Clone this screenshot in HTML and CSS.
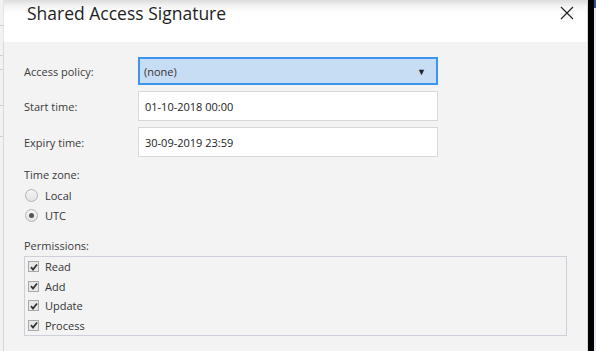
FILE: index.html
```html
<!DOCTYPE html>
<html>
<head>
<meta charset="utf-8">
<link rel="stylesheet" href="styles.css">
</head>
<body>
<div class="screen">
  <div class="behind-left">
    <span class="tick t1"></span><span class="tick t2"></span><span class="tick t3"></span><span class="tick t4"></span><span class="tick t5"></span>
  </div>
  <div class="dialog">
    <div class="header">
      <h1 class="title">Shared Access Signature</h1>
      <svg class="close" width="14" height="14" viewBox="0 0 14 14"><path d="M1 1 L13 13 M13 1 L1 13" stroke="#222" stroke-width="1.2" fill="none"/></svg>
    </div>
    <div class="content">
      <div class="row">
        <span class="label">Access policy:</span>
        <div class="select"><span>(none)</span><span class="arrow">▼</span></div>
      </div>
      <div class="row">
        <span class="label">Start time:</span>
        <div class="input">01-10-2018 00:00</div>
      </div>
      <div class="row">
        <span class="label">Expiry time:</span>
        <div class="input">30-09-2019 23:59</div>
      </div>
      <div class="group">
        <div class="glabel">Time zone:</div>
        <div class="opt"><span class="radio"></span>Local</div>
        <div class="opt"><span class="radio on"></span>UTC</div>
      </div>
      <div class="group perms">
        <div class="glabel">Permissions:</div>
        <div class="permbox">
          <div class="opt chk"><span class="check"><svg width="8" height="8" viewBox="0 0 8 8"><path d="M1 4.2 L3 6.5 L7 1.5" stroke="#333" stroke-width="1.8" fill="none"/></svg></span>Read</div>
          <div class="opt chk"><span class="check"><svg width="8" height="8" viewBox="0 0 8 8"><path d="M1 4.2 L3 6.5 L7 1.5" stroke="#333" stroke-width="1.8" fill="none"/></svg></span>Add</div>
          <div class="opt chk"><span class="check"><svg width="8" height="8" viewBox="0 0 8 8"><path d="M1 4.2 L3 6.5 L7 1.5" stroke="#333" stroke-width="1.8" fill="none"/></svg></span>Update</div>
          <div class="opt chk"><span class="check"><svg width="8" height="8" viewBox="0 0 8 8"><path d="M1 4.2 L3 6.5 L7 1.5" stroke="#333" stroke-width="1.8" fill="none"/></svg></span>Process</div>
        </div>
      </div>
    </div>
  </div>
  <div class="black-bar"></div>
  <div class="behind-right"><span class="blue-top"></span></div>
</div>
</body>
</html>
```
FILE: styles.css
```css
* { box-sizing: border-box; }
html, body { margin: 0; padding: 0; }
body {
  width: 596px;
  height: 351px;
  overflow: hidden;
  font-family: "Open Sans", "Noto Sans", sans-serif;
  font-size: 11px;
  color: #333;
  background: #f3f3f3;
}
.screen {
  display: flex;
  width: 596px;
  height: 351px;
}
.behind-left {
  width: 3px;
  background: #f2f2f2;
  position: relative;
  flex: none;
}
.tick {
  position: absolute;
  left: 0;
  width: 3px;
  height: 1px;
  background: #cfcfcf;
}
.t1 { top: 25px; }
.t2 { top: 55px; }
.t3 { top: 69px; }
.t4 { top: 105px; }
.t5 { top: 136px; }
.dialog {
  width: 585px;
  flex: none;
  display: flex;
  flex-direction: column;
  border-right: 1px solid #d6d6dc;
}
.header {
  height: 42px;
  background: linear-gradient(#dcdcdc 0px, #f4f4f4 6px, #fdfdfd 12px, #ffffff 16px);
  display: flex;
  align-items: flex-start;
  justify-content: space-between;
  padding: 0 13px 0 23px;
  border-left: 1px solid #e4e4e4;
}
.title {
  margin: 0;
  font-family: "Open Sans", "Noto Sans", sans-serif;
  font-weight: 400;
  font-size: 17.5px;
  color: #1e1e1e;
  line-height: 26px;
}
.close { margin-top: 6px; }
.content {
  flex: 1;
  background: #f3f3f3;
  border-left: 1px solid #d9d9d9;
  padding: 15px 20px 0 20px;
}
.row {
  display: flex;
  align-items: center;
  margin-bottom: 6px;
}
.label {
  width: 114px;
  flex: none;
  color: #3a3a3a;
}
.select {
  width: 300px;
  height: 28px;
  background: #c7ddf4;
  border: 2px solid #3d94ee;
  display: flex;
  align-items: center;
  justify-content: space-between;
  padding: 0 10px 0 4px;
  color: #333;
}
.arrow { font-size: 9px; color: #222; }
.input {
  width: 300px;
  height: 30px;
  background: #fff;
  border: 1px solid #d8d8dc;
  display: flex;
  align-items: center;
  padding: 0 6px;
  color: #222;
}
.group { margin-top: 10px; }
.glabel { color: #3a3a3a; margin-bottom: 3px; }
.opt {
  display: flex;
  align-items: center;
  height: 20px;
  color: #333;
}
.radio {
  width: 13px;
  height: 13px;
  border-radius: 50%;
  border: 1px solid #b4b4b4;
  background: linear-gradient(#f4f4f4, #e4e4e4);
  margin: 0 7px 0 1px;
  position: relative;
}
.radio.on::after {
  content: "";
  position: absolute;
  left: 3px;
  top: 3px;
  width: 5px;
  height: 5px;
  border-radius: 50%;
  background: #555;
}
.perms { margin-top: 13px; }
.permbox {
  width: 543px;
  height: 80px;
  border: 1px solid #cfcfdc;
  padding: 0 3px;
}
.chk { height: 19.5px; }
.check {
  width: 11px;
  height: 11px;
  border: 1px solid #a8a8a8;
  background: #e8e8e8;
  display: flex;
  align-items: center;
  justify-content: center;
  margin-right: 6px;
}
.black-bar {
  width: 6px;
  flex: none;
  background: #000;
}
.behind-right {
  flex: 1;
  background: #e8e8ec;
  position: relative;
}
.blue-top {
  position: absolute;
  left: 0; top: 0;
  width: 100%;
  height: 8px;
  background: #2b579a;
}
```
